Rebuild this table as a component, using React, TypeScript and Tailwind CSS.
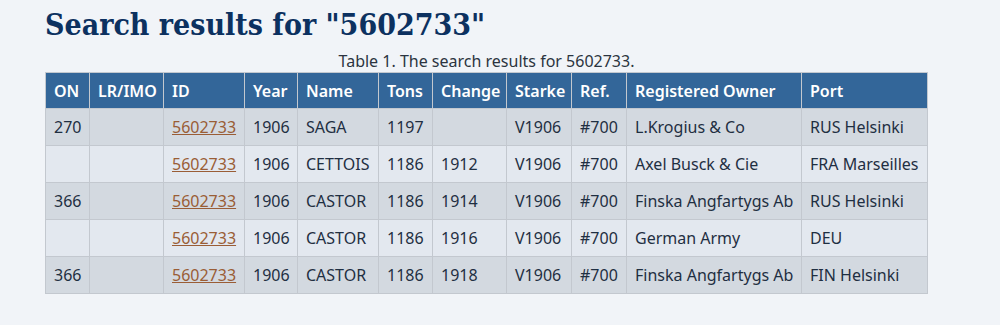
import React from "react";

type Row = {
  on: string;
  lr: string;
  id: string;
  year: string;
  name: string;
  tons: string;
  change: string;
  starke: string;
  ref: string;
  owner: string;
  port: string;
};

const rows: Row[] = [
  { on: "270", lr: "", id: "5602733", year: "1906", name: "SAGA", tons: "1197", change: "", starke: "V1906", ref: "#700", owner: "L.Krogius & Co", port: "RUS Helsinki" },
  { on: "", lr: "", id: "5602733", year: "1906", name: "CETTOIS", tons: "1186", change: "1912", starke: "V1906", ref: "#700", owner: "Axel Busck & Cie", port: "FRA Marseilles" },
  { on: "366", lr: "", id: "5602733", year: "1906", name: "CASTOR", tons: "1186", change: "1914", starke: "V1906", ref: "#700", owner: "Finska Angfartygs Ab", port: "RUS Helsinki" },
  { on: "", lr: "", id: "5602733", year: "1906", name: "CASTOR", tons: "1186", change: "1916", starke: "V1906", ref: "#700", owner: "German Army", port: "DEU" },
  { on: "366", lr: "", id: "5602733", year: "1906", name: "CASTOR", tons: "1186", change: "1918", starke: "V1906", ref: "#700", owner: "Finska Angfartygs Ab", port: "FIN Helsinki" },
];

const headers = [
  { label: "ON", w: "w-[44px]" },
  { label: "LR/IMO", w: "w-[74px]" },
  { label: "ID", w: "w-[81px]" },
  { label: "Year", w: "w-[53px]" },
  { label: "Name", w: "w-[81px]" },
  { label: "Tons", w: "w-[54px]" },
  { label: "Change", w: "w-[74px]" },
  { label: "Starke", w: "w-[65px]" },
  { label: "Ref.", w: "w-[55px]" },
  { label: "Registered Owner", w: "w-[175px]" },
  { label: "Port", w: "w-[126px]" },
];

const td = "border border-[#c3c8cf] px-2 h-[37px] align-middle whitespace-nowrap";

export default function App() {
  return (
    <div className="min-h-[325px] bg-[#f1f4f8] font-['Noto_Sans','Open_Sans',sans-serif] text-[#1f2f42]">
      <div className="pl-[45px] pt-[4px]">
        <h1 className="font-['DejaVu_Serif_Condensed','DejaVu_Serif',serif] [font-stretch:condensed] font-bold text-[30px] leading-[42px] text-[#0c3160]">
          Search results for "5602733"
        </h1>
        <table className="table-fixed border-collapse w-[882px] mt-[4px] text-[16px]">
          <caption className="text-[16px] leading-[22px] text-[#2b3440] caption-top">
            Table 1. The search results for 5602733.
          </caption>
          <thead>
            <tr className="bg-[#336699] text-white">
              {headers.map((h) => (
                <th
                  key={h.label}
                  className={`${h.w} border border-[#c3c8cf] px-2 h-[36px] text-left font-semibold whitespace-nowrap`}
                >
                  {h.label}
                </th>
              ))}
            </tr>
          </thead>
          <tbody>
            {rows.map((r, i) => (
              <tr key={i} className={i % 2 === 0 ? "bg-[#d3d9e0]" : "bg-[#e3e8ef]"}>
                <td className={td}>{r.on}</td>
                <td className={td}>{r.lr}</td>
                <td className={td}>
                  <a href="#" className="text-[#9a5d36] underline">
                    {r.id}
                  </a>
                </td>
                <td className={td}>{r.year}</td>
                <td className={td}>{r.name}</td>
                <td className={td}>{r.tons}</td>
                <td className={td}>{r.change}</td>
                <td className={td}>{r.starke}</td>
                <td className={td}>{r.ref}</td>
                <td className={td}>{r.owner}</td>
                <td className={td}>{r.port}</td>
              </tr>
            ))}
          </tbody>
        </table>
      </div>
    </div>
  );
}
